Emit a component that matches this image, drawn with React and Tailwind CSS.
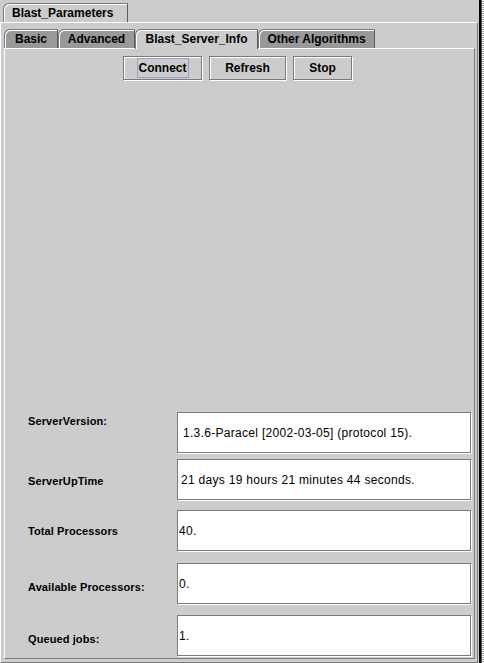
import React from "react";

const font = "font-['Liberation_Sans',Arial,Helvetica,sans-serif]";

function Tab({ label, w, selected }) {
  return (
    <div
      className={`shrink-0 ${w} rounded-tl-[6px] border-t border-l border-r border-t-[#7a7a7a] border-l-[#7a7a7a] border-r-[#5a5a5a] shadow-[inset_1px_1px_0_#ffffff] flex items-center justify-center text-[12px] font-bold leading-none ${
        selected ? "bg-[#cccccc] relative z-10 -mb-px h-[20px] pb-px" : "bg-[#999999] h-[19px]"
      }`}
    >
      {label}
    </div>
  );
}

function Button({ label, w, focused }) {
  return (
    <div
      className={`shrink-0 h-[24px] ${w} border border-[#7a7a7a] shadow-[inset_1px_1px_0_#ffffff,1px_1px_0_#ffffff] bg-[#cccccc] flex items-center justify-center text-[12px] font-bold leading-none`}
    >
      {focused ? (
        <span className="border border-[#9c9ccf] px-px py-[3px]">{label}</span>
      ) : (
        label
      )}
    </div>
  );
}

function Row({ label, value, mt, lpt, vpl }) {
  return (
    <div className={`flex items-start ${mt}`}>
      <div className={`shrink-0 w-[172px] pl-[23px] ${lpt} text-[11px] font-bold leading-[13px] tracking-[0.1px]`}>
        {label}
      </div>
      <div
        className={`shrink-0 h-[41px] w-[294px] border border-[#7a7a7a] bg-white shadow-[1px_1px_0_#ffffff] flex items-center ${vpl} text-[12px] leading-none tracking-[0.3px]`}
      >
        {value}
      </div>
    </div>
  );
}

export default function App() {
  return (
    <div className={`w-[484px] h-[663px] bg-[#cccccc] flex overflow-hidden text-black ${font}`}>
      <div className="w-[478px] flex flex-col">
        <div className="h-[22px] flex items-end pl-[3px]">
          <div className="h-[19px] w-[125px] rounded-tl-[6px] border-t border-l border-r border-t-[#7a7a7a] border-l-[#7a7a7a] border-r-[#5a5a5a] shadow-[inset_1px_1px_0_#ffffff] bg-[#cccccc] flex items-center pl-[8px] text-[12px] font-bold leading-none">
            Blast_Parameters
          </div>
        </div>
        <div className="flex-1 flex flex-col border-t border-l border-r border-b border-t-white border-l-white border-r-[#7a7a7a] border-b-[#7a7a7a] pl-[3px] pr-[2px] pb-[3px]">
          <div className="h-[25px] flex items-end">
            <Tab label="Basic" w="w-[54px]" />
            <Tab label="Advanced" w="w-[77px]" />
            <Tab label="Blast_Server_Info" w="w-[123px]" selected />
            <Tab label="Other Algorithms" w="w-[117px]" />
          </div>
          <div className="flex-1 border-t border-l border-r border-b border-t-white border-l-white border-r-[#7a7a7a] border-b-[#7a7a7a] pt-[7px]">
            <div className="flex gap-[7px] pl-[118px]">
              <Button label="Connect" w="w-[79px]" focused />
              <Button label="Refresh" w="w-[77px]" />
              <Button label="Stop" w="w-[59px]" />
            </div>
            <div className="mt-[332px] flex flex-col">
              <Row label="ServerVersion:" value="1.3.6-Paracel [2002-03-05] (protocol 15)." mt="" lpt="pt-[3px]" vpl="pl-[5px]" />
              <Row label="ServerUpTime" value="21 days 19 hours 21 minutes 44 seconds." mt="mt-[6px]" lpt="pt-[16px]" vpl="pl-[3px]" />
              <Row label="Total Processors" value="40." mt="mt-[10px]" lpt="pt-[15px]" vpl="pl-px" />
              <Row label="Available Processors:" value="0." mt="mt-[12px]" lpt="pt-[18px]" vpl="pl-px" />
              <Row label="Queued jobs:" value="1." mt="mt-[11px]" lpt="pt-[18px]" vpl="pl-px" />
            </div>
          </div>
        </div>
      </div>
      <div className="w-px bg-[#cccccc]" />
      <div className="w-[2px] bg-black" />
      <div className="w-px bg-[#555555]" />
      <div className="w-[2px] bg-[repeating-linear-gradient(0deg,#ffffff_0px,#ffffff_1px,#a0a0a0_1px,#a0a0a0_2px)]" />
    </div>
  );
}
